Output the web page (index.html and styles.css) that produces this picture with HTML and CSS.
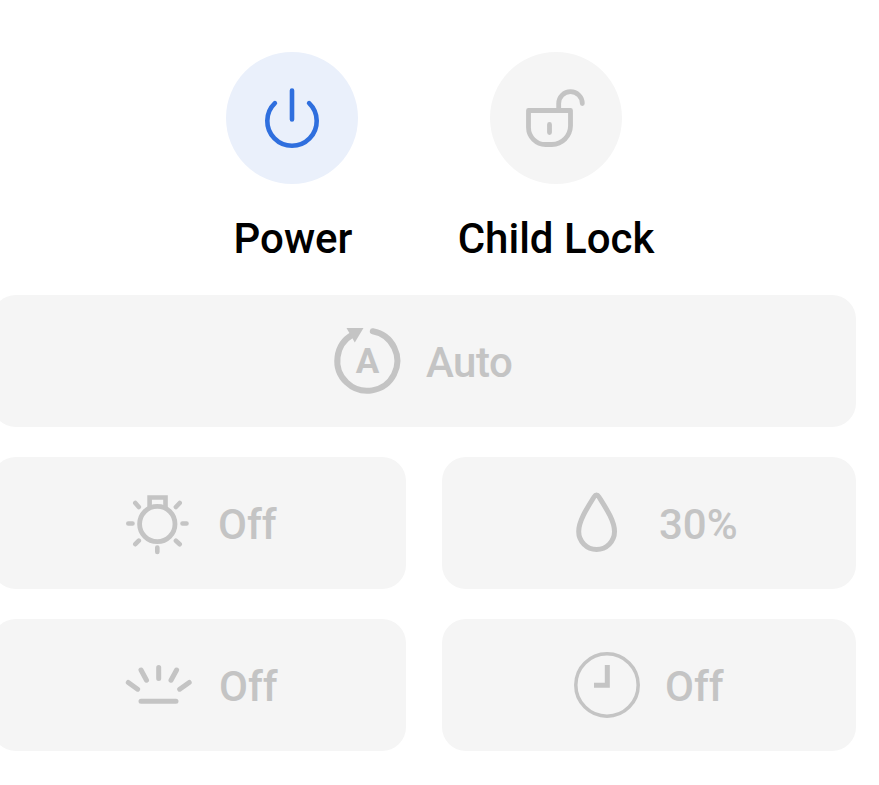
FILE: index.html
```html
<!DOCTYPE html>
<html lang="en">
<head>
<meta charset="utf-8">
<title>Device controls</title>
<link rel="stylesheet" href="styles.css">
</head>
<body>
<main class="panel">
  <div class="toggles">
    <div class="toggle toggle-on">
      <div class="disc">
        <svg width="66" height="66" viewBox="0 0 66 66" stroke-width="4.6"><path d="M33 5.500V34.500M15.900 18.200a24.700 24.700 0 1 0 34.200 0"/></svg>
      </div>
      <span class="label">Power</span>
    </div>
    <div class="toggle">
      <div class="disc">
        <svg width="66" height="66" viewBox="0 0 66 66" stroke-width="4.800"><path d="M5.500 25.500H47.500V41A19 19 0 0 1 29 59.500H22.500A17 17 0 0 1 5.500 42.800ZM35.700 25V18.500A11.800 11.800 0 0 1 59.300 18.500M26.500 39.500V47.500"/></svg>
      </div>
      <span class="label">Child Lock</span>
    </div>
  </div>
  <div class="tiles">
    <div class="tile auto">
      <svg width="66" height="66" viewBox="0 0 66 66" stroke-width="6"><path d="M38.800 3.300A30 30 0 1 1 18.500 6.700"/><path class="solid" d="M12.500 0H29.500L20.800 14.500Z"/><text class="mark" x="33.500" y="45">A</text></svg>
      <span>Auto</span>
    </div>
    <div class="tile light">
      <svg width="66" height="66" viewBox="0 0 66 66" stroke-width="4.600"><circle cx="33.300" cy="34" r="17.700" stroke-width="4.800"/><path class="square" d="M25.600 17.500V7.500H41.500V17.500"/><path d="M4.300 33.500H8.500M58.500 33.500H62.500M33.300 57.500V62M11.300 13L14.800 17M55.700 13L51.900 17M11.300 54.200L14.800 50.700M55.700 54.200L51.900 50.700"/></svg>
      <span>Off</span>
    </div>
    <div class="tile humidity">
      <svg width="66" height="66" viewBox="0 0 66 66" stroke-width="5"><path d="M32.500 5C31.300 5 30.700 5.900 30 7C22.500 19 14.700 31 14.700 41.500A17.900 17.900 0 0 0 50.500 41.500C50.500 31 42.500 19 35 7C34.300 5.900 33.700 5 32.500 5Z"/></svg>
      <span>30%</span>
    </div>
    <div class="tile glow">
      <svg width="66" height="66" viewBox="0 0 66 66" stroke-width="5"><path d="M17 49.300H52M4.300 30.500L13.600 37.200M17 18L22.500 28.200M34.700 15.500V26.500M52.600 18L47 28.200M65.200 30.500L55.700 37.200"/></svg>
      <span>Off</span>
    </div>
    <div class="tile timer">
      <svg width="66" height="66" viewBox="0 0 66 66" stroke-width="3.500"><circle cx="33" cy="33" r="31.200"/><path class="square" d="M33.300 13V33.300H20" stroke-width="5"/></svg>
      <span>Off</span>
    </div>
  </div>
</main>
</body>
</html>
```
FILE: styles.css
```css
body {
  margin: 0;
  background: #fff;
  font-family: Roboto, sans-serif;
  font-weight: 500;
  font-size: 42px;
  line-height: 50px;
  overflow: hidden;
}

svg {
  flex: none;
  overflow: visible;
  fill: none;
  stroke: currentColor;
  stroke-linecap: round;
  stroke-linejoin: round;
}

.panel {
  width: 864px;
  margin-left: -8px;
  padding-top: 52px;
}

.toggles {
  display: flex;
  justify-content: center;
  height: 243px;
}

.toggle {
  width: 264px;
  display: flex;
  flex-direction: column;
  align-items: center;
  gap: 30px;
}

.disc {
  width: 132px;
  height: 132px;
  border-radius: 50%;
  display: flex;
  align-items: center;
  justify-content: center;
  background: #f5f5f5;
  color: #c4c4c4;
}

.toggle-on .disc {
  background: #eaf0fb;
  color: #2f6fde;
}

.label {
  color: #000;
  white-space: nowrap;
}

.toggle-on .label {
  padding-left: 2px;
}

.tiles {
  display: grid;
  grid-template-columns: 414px 414px;
  grid-auto-rows: 132px;
  gap: 30px 36px;
}

.tile {
  display: flex;
  align-items: center;
  gap: 28px;
  box-sizing: border-box;
  padding-left: 132px;
  border-radius: 24px;
  background: #f5f5f5;
  color: #c4c4c4;
}

.tile span {
  padding-top: 3px;
}

.auto {
  grid-column: 1 / -1;
  padding-left: 342px;
  gap: 26px;
  letter-spacing: -0.5px;
}

.humidity {
  padding-left: 122px;
  gap: 29px;
}

.glow {
  gap: 29px;
}

.timer {
  gap: 25px;
}

.glow span,
.timer span {
  padding-top: 4px;
}

.solid {
  fill: currentColor;
  stroke: none;
}

.square {
  stroke-linecap: butt;
  stroke-linejoin: miter;
}

.mark {
  fill: currentColor;
  stroke: none;
  font-size: 35px;
  font-weight: 700;
  letter-spacing: 0;
  text-anchor: middle;
}
```
